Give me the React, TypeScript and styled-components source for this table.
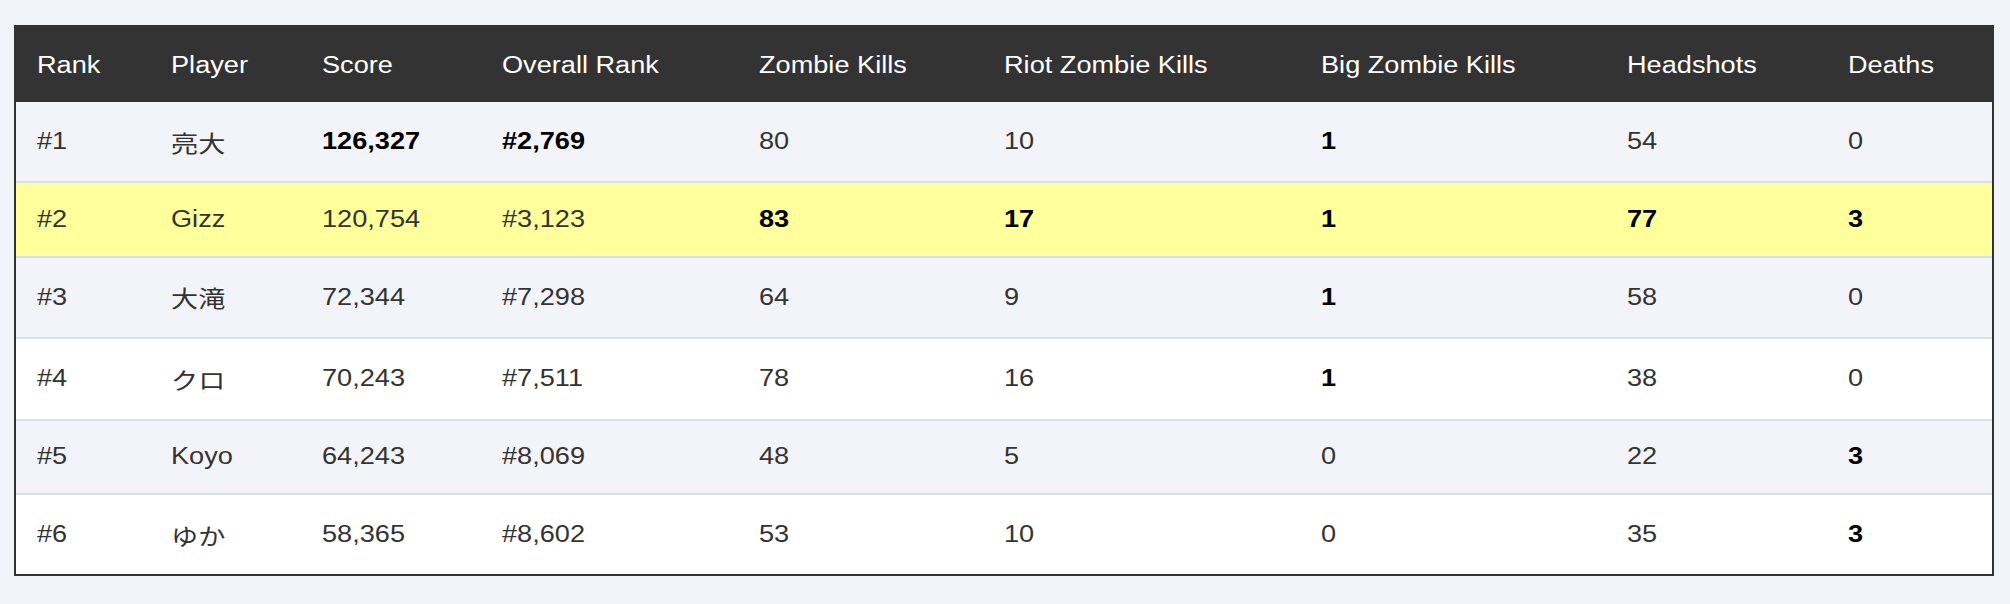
import styled, {createGlobalStyle} from "styled-components";

const GlobalStyle = createGlobalStyle`
	html, body {
		margin: 0;
		padding: 0;
		background: #f3f4f9;
	}
	body {
		font-family: "Liberation Sans", "Noto Sans CJK JP", Arial, sans-serif;
	}
`;

const Page = styled.div`
	min-height: 100vh;
	box-sizing: border-box;
	padding: 25px 16px 0 14px;
	background: #f3f4f9;
`;

const Board = styled.table`
	width: 100%;
	table-layout: fixed;
	border-collapse: separate;
	border-spacing: 0;
	border: 2px solid #333;
	font-size: 23px;
	color: #333;
`;

const Col = styled.col<{ $w: number }>`
	width: ${(p) => p.$w}px;
`;

const HeadCell = styled.th`
	background: #333;
	color: #fff;
	font-weight: normal;
	text-align: left;
	padding: 25px 21px 23px;
	white-space: nowrap;
`;

const Row = styled.tr<{ $tone: "light" | "white" | "mine" }>`
	background: ${(p) => (p.$tone === "mine" ? "#ffff9c" : p.$tone === "white" ? "#ffffff" : "#f3f4f9")};

	&:not(:last-child) > td {
		border-bottom: 2px solid #d5e1e9;
	}
`;

const Cell = styled.td`
	padding: 22.7px 21px;
	text-align: left;
	white-space: nowrap;
`;

// the reference renders the type a little wider than Liberation Sans
const Text = styled.span<{ $bold?: boolean }>`
	display: inline-block;
	transform: scaleX(1.18);
	transform-origin: left center;
	font-weight: ${(p) => (p.$bold ? 700 : 400)};
	color: ${(p) => (p.$bold ? "#000" : "inherit")};
`;

const columns = [
	{label: "Rank", w: 134},
	{label: "Player", w: 151},
	{label: "Score", w: 180},
	{label: "Overall Rank", w: 257},
	{label: "Zombie Kills", w: 245},
	{label: "Riot Zombie Kills", w: 317},
	{label: "Big Zombie Kills", w: 306},
	{label: "Headshots", w: 221},
	{label: "Deaths", w: 165},
];

type Entry = { values: string[]; bold: number[]; tone: "light" | "white" | "mine" };

const rows: Entry[] = [
	{values: ["#1", "亮大", "126,327", "#2,769", "80", "10", "1", "54", "0"], bold: [2, 3, 6], tone: "light"},
	{values: ["#2", "Gizz", "120,754", "#3,123", "83", "17", "1", "77", "3"], bold: [4, 5, 6, 7, 8], tone: "mine"},
	{values: ["#3", "大滝", "72,344", "#7,298", "64", "9", "1", "58", "0"], bold: [6], tone: "light"},
	{values: ["#4", "クロ", "70,243", "#7,511", "78", "16", "1", "38", "0"], bold: [6], tone: "white"},
	{values: ["#5", "Koyo", "64,243", "#8,069", "48", "5", "0", "22", "3"], bold: [8], tone: "light"},
	{values: ["#6", "ゆか", "58,365", "#8,602", "53", "10", "0", "35", "3"], bold: [8], tone: "white"},
];

export default function App() {
	return (
		<>
			<GlobalStyle />
			<Page>
				<Board>
					<colgroup>
						{columns.map((c) => <Col key={c.label} $w={c.w} />)}
					</colgroup>
					<thead>
						<tr>
							{columns.map((c) => (
								<HeadCell key={c.label}><Text>{c.label}</Text></HeadCell>
							))}
						</tr>
					</thead>
					<tbody>
						{rows.map((r) => (
							<Row key={r.values[0]} $tone={r.tone}>
								{r.values.map((v, i) => (
									<Cell key={i}><Text $bold={r.bold.includes(i)}>{v}</Text></Cell>
								))}
							</Row>
						))}
					</tbody>
				</Board>
			</Page>
		</>
	);
}
